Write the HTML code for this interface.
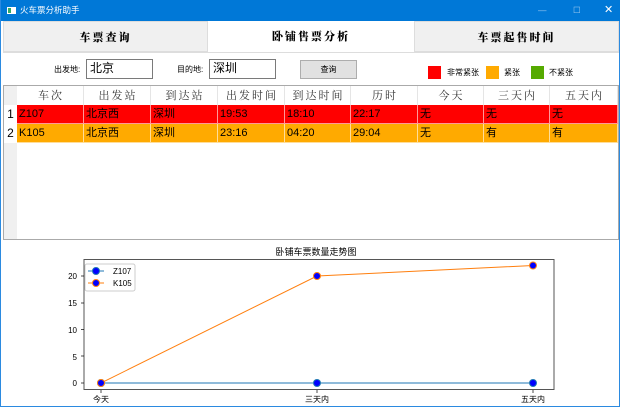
<!DOCTYPE html><html><head><meta charset="utf-8"><style>
*{margin:0;padding:0;box-sizing:border-box}
body{width:620px;height:407px;background:#fff;font-family:"Liberation Sans","Noto Sans CJK SC",sans-serif;position:relative;overflow:hidden;border-left:1px solid #2b8ae0;border-right:1px solid #2b8ae0;border-bottom:1px solid #2b8ae0}
.abs{position:absolute}
.title{left:0;top:0;width:620px;height:21px;background:#0078d7;color:#fff;font-size:8.5px;line-height:20px}
.tab{top:21px;height:31px;font-family:"Noto Serif CJK SC",serif;font-weight:900;font-size:11px;text-align:center;line-height:31px;letter-spacing:2px;color:#000}
.lbl{font-size:8px;color:#000;top:64px}
.inp{top:59px;height:20px;border:1px solid #7a7a7a;background:#fff;font-size:12px;line-height:17px;padding-left:3px}
.sw{top:66px;width:13px;height:13px}
.c{position:absolute;height:19px;font-size:11px;line-height:19px;padding-left:2px;border-right:1px solid rgba(255,255,255,.6);border-bottom:1px solid rgba(255,255,255,.6)}
.h{font-family:"Noto Serif CJK SC",serif;text-align:center;font-size:11px;letter-spacing:2px;color:#333;border-right:1px solid #e5e5e5;border-bottom:none}
.r1{background:#ff0000}.r2{background:#ffaa00}
</style></head><body>
<div class="abs title"><span style="display:inline-block;width:9px;height:7px;border:1px solid #fff;margin:0 4px 0 6px;vertical-align:-1px;background:linear-gradient(90deg,#3a6 0 40%,#fff 40%)"></span>火车票分析助手
<span class="abs" style="left:537px;top:0;color:#9cc8ee">—</span><span class="abs" style="left:572px;top:0;color:#9cc8ee">☐</span><span class="abs" style="left:603px;top:0;font-size:11px">✕</span></div>
<div class="abs tab" style="left:2px;width:205px;background:#f0f0f0;border:1px solid #ddd">车票查询</div>
<div class="abs tab" style="left:207px;width:206px;background:#fff">卧铺售票分析</div>
<div class="abs tab" style="left:413px;width:205px;background:#f0f0f0;border:1px solid #ddd">车票起售时间</div>
<div class="abs" style="left:2px;top:52px;width:616px;height:1px;background:#ddd"></div>
<div class="abs lbl" style="left:53px">出发地:</div>
<div class="abs inp" style="left:85px;width:67px">北京</div>
<div class="abs lbl" style="left:176px">目的地:</div>
<div class="abs inp" style="left:208px;width:67px">深圳</div>
<div class="abs" style="left:299px;top:60px;width:57px;height:19px;background:#e1e1e1;border:1px solid #adadad;font-size:8px;text-align:center;line-height:17px">查询</div>
<div class="abs sw" style="left:427px;background:#ff0000"></div><div class="abs lbl" style="left:446px;top:67px">非常紧张</div>
<div class="abs sw" style="left:485px;background:#ffaa00"></div><div class="abs lbl" style="left:503px;top:67px">紧张</div>
<div class="abs sw" style="left:530px;background:#55aa00"></div><div class="abs lbl" style="left:548px;top:67px">不紧张</div>
<div class="abs" style="left:2px;top:85px;width:616px;height:155px;border:1px solid #aaa;background:#fff">
<div class="abs" style="left:0;top:0;width:13px;height:153px;background:#f0f0f0"></div>
<div class="abs" style="left:0;top:19px;width:13px;height:19px;background:#fff;font-size:12px;text-align:center;line-height:19px">1</div>
<div class="abs" style="left:0;top:38px;width:13px;height:19px;background:#fff;font-size:12px;text-align:center;line-height:19px">2</div>
<div class="c h" style="left:13px;top:0;width:67px">车次</div>
<div class="c h" style="left:80px;top:0;width:67px">出发站</div>
<div class="c h" style="left:147px;top:0;width:67px">到达站</div>
<div class="c h" style="left:214px;top:0;width:67px">出发时间</div>
<div class="c h" style="left:281px;top:0;width:66px">到达时间</div>
<div class="c h" style="left:347px;top:0;width:67px">历时</div>
<div class="c h" style="left:414px;top:0;width:66px">今天</div>
<div class="c h" style="left:480px;top:0;width:66px">三天内</div>
<div class="c h" style="left:546px;top:0;width:68px">五天内</div>
<div class="c r1" style="left:13px;top:19px;width:67px">Z107</div>
<div class="c r1" style="left:80px;top:19px;width:67px">北京西</div>
<div class="c r1" style="left:147px;top:19px;width:67px">深圳</div>
<div class="c r1" style="left:214px;top:19px;width:67px">19:53</div>
<div class="c r1" style="left:281px;top:19px;width:66px">18:10</div>
<div class="c r1" style="left:347px;top:19px;width:67px">22:17</div>
<div class="c r1" style="left:414px;top:19px;width:66px">无</div>
<div class="c r1" style="left:480px;top:19px;width:66px">无</div>
<div class="c r1" style="left:546px;top:19px;width:68px">无</div>
<div class="c r2" style="left:13px;top:38px;width:67px">K105</div>
<div class="c r2" style="left:80px;top:38px;width:67px">北京西</div>
<div class="c r2" style="left:147px;top:38px;width:67px">深圳</div>
<div class="c r2" style="left:214px;top:38px;width:67px">23:16</div>
<div class="c r2" style="left:281px;top:38px;width:66px">04:20</div>
<div class="c r2" style="left:347px;top:38px;width:67px">29:04</div>
<div class="c r2" style="left:414px;top:38px;width:66px">无</div>
<div class="c r2" style="left:480px;top:38px;width:66px">有</div>
<div class="c r2" style="left:546px;top:38px;width:68px">有</div>
</div>
<svg class="abs" style="left:0;top:240px" width="620" height="167" font-family="Liberation Sans,Noto Sans CJK SC,sans-serif">
<text x="315" y="15" font-size="9" text-anchor="middle" fill="#000">卧铺车票数量走势图</text>
<rect x="83" y="19.5" width="470" height="130" fill="#fff" stroke="#555" stroke-width="1"/>
<g font-size="8" fill="#000" text-anchor="end">
<text x="76" y="146">0</text><text x="76" y="120">5</text><text x="76" y="93">10</text><text x="76" y="66">15</text><text x="76" y="39">20</text></g>
<g stroke="#000" stroke-width="0.7"><line x1="80" x2="83" y1="143" y2="143"/><line x1="80" x2="83" y1="116" y2="116"/><line x1="80" x2="83" y1="89.5" y2="89.5"/><line x1="80" x2="83" y1="63" y2="63"/><line x1="80" x2="83" y1="36" y2="36"/>
<line x1="100" x2="100" y1="150" y2="153"/><line x1="316" x2="316" y1="150" y2="153"/><line x1="532" x2="532" y1="150" y2="153"/></g>
<g font-size="8" text-anchor="middle"><text x="100" y="162">今天</text><text x="316" y="162">三天内</text><text x="532" y="162">五天内</text></g>
<polyline points="100,143 316,143 532,143" fill="none" stroke="#1f77b4" stroke-width="1"/>
<polyline points="100,143 316,36 532,25.5" fill="none" stroke="#ff7f0e" stroke-width="1"/>
<g fill="#0000ff"><circle cx="100" cy="143" r="3.5" stroke="#1f77b4"/><circle cx="316" cy="143" r="3.5" stroke="#1f77b4"/><circle cx="532" cy="143" r="3.5" stroke="#1f77b4"/>
<circle cx="100" cy="143" r="3.5" stroke="#ff7f0e"/><circle cx="316" cy="36" r="3.5" stroke="#ff7f0e"/><circle cx="532" cy="25.5" r="3.5" stroke="#ff7f0e"/></g>
<rect x="84" y="24" width="50" height="27" fill="#fff" stroke="#ccc" rx="2"/>
<line x1="87" x2="103" y1="31" y2="31" stroke="#1f77b4"/><circle cx="95" cy="31" r="3.5" fill="#00f" stroke="#1f77b4"/>
<line x1="87" x2="103" y1="43" y2="43" stroke="#ff7f0e"/><circle cx="95" cy="43" r="3.5" fill="#00f" stroke="#ff7f0e"/>
<text x="112" y="34" font-size="8">Z107</text><text x="112" y="46" font-size="8">K105</text>
</svg>
</body></html>
